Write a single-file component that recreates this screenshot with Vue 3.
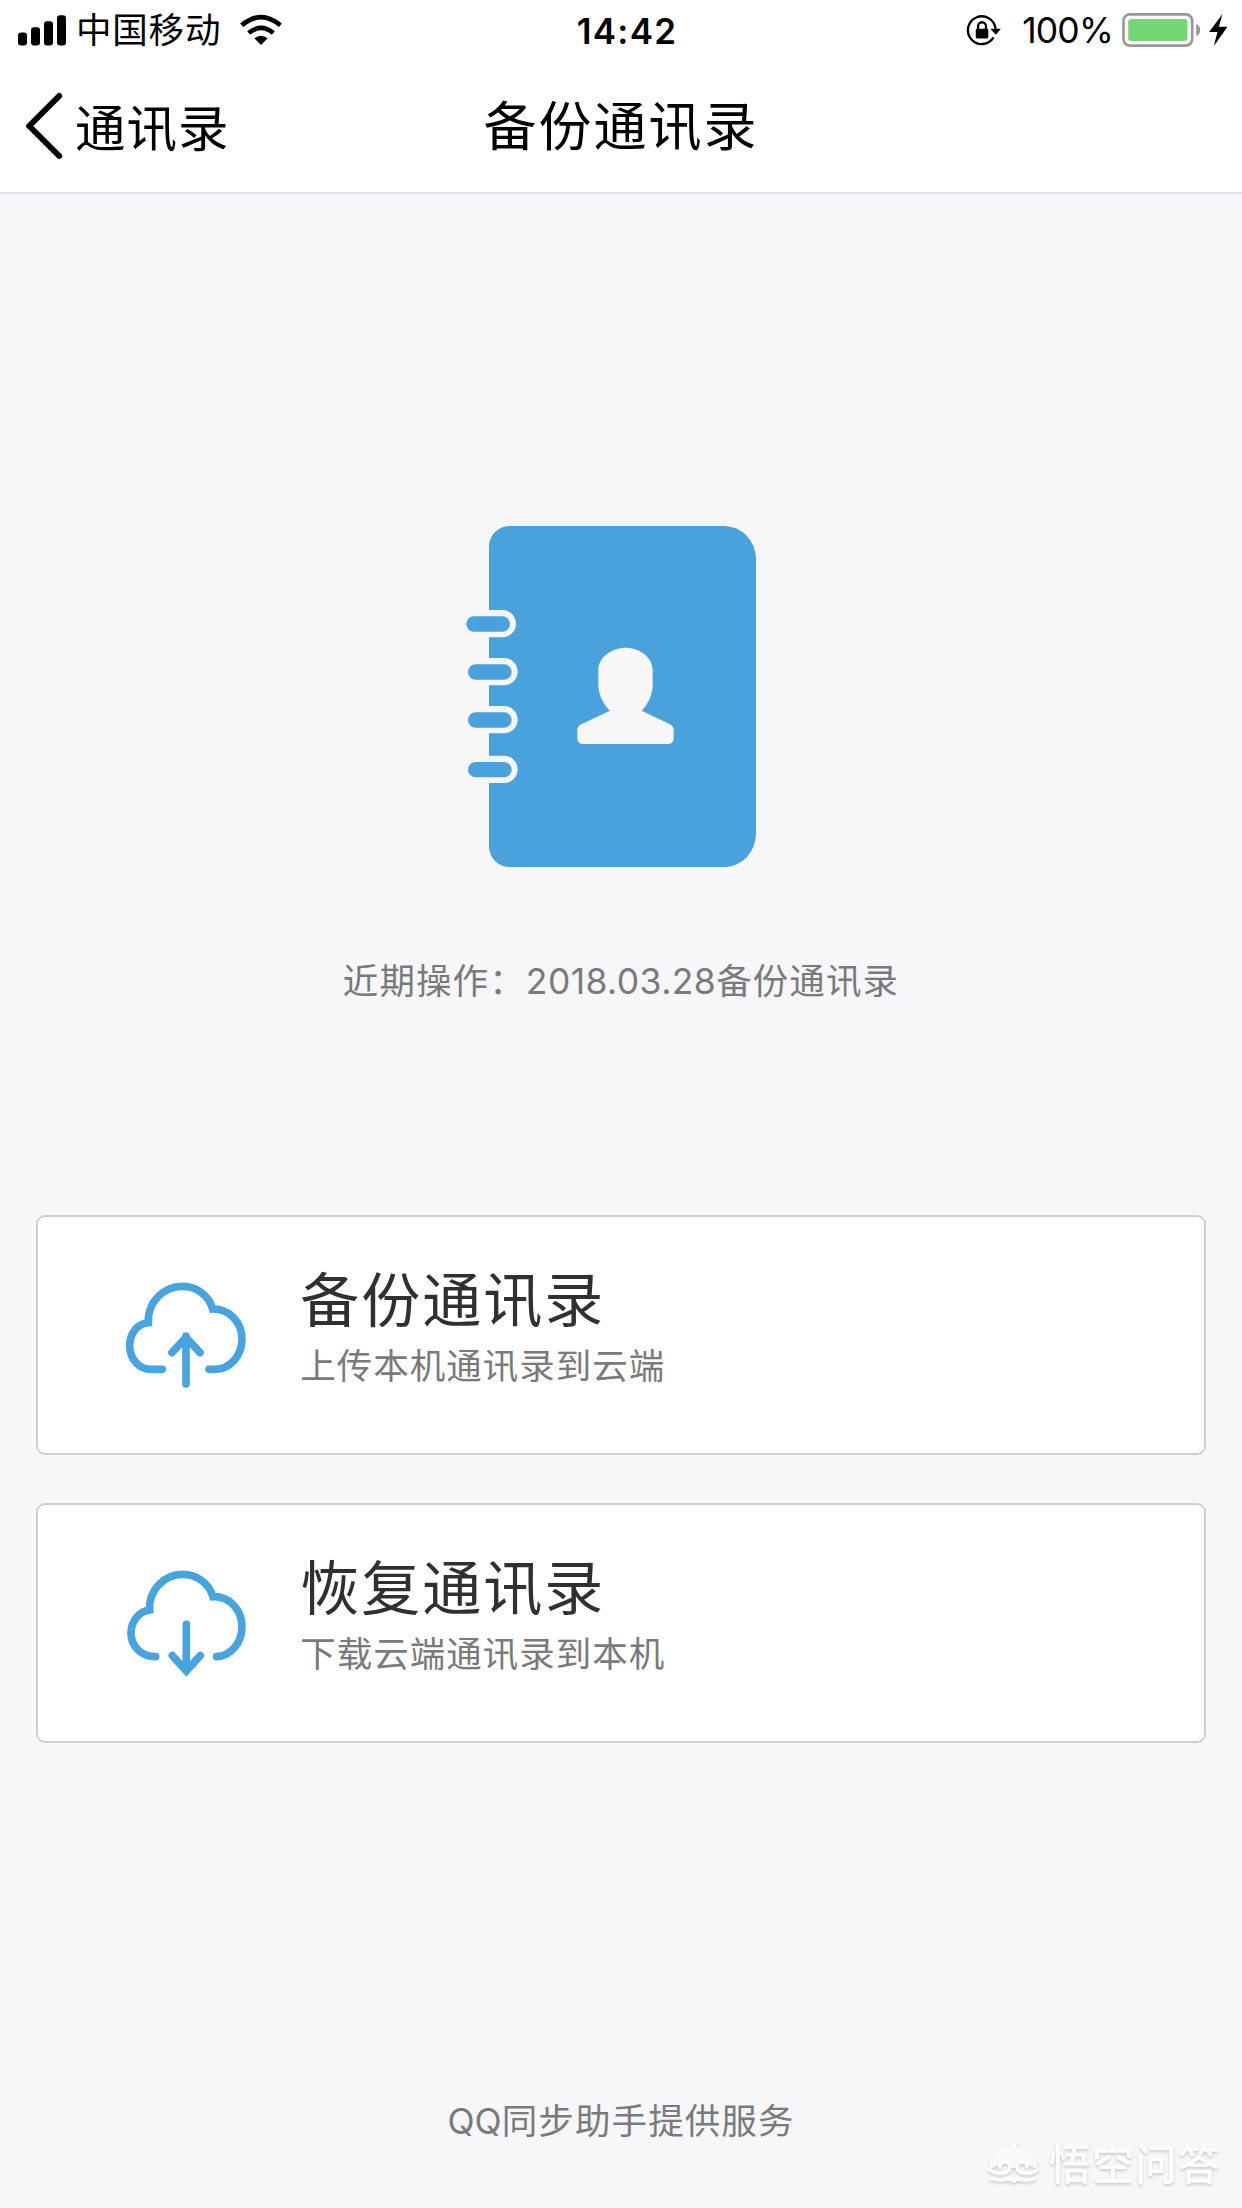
<script setup>
const actions = [
  { id: 'up', title: '备份通讯录', note: '上传本机通讯录到云端' },
  { id: 'down', title: '恢复通讯录', note: '下载云端通讯录到本机' },
]
const rings = [
  { x: 49, y: 319 },
  { x: 54, y: 463 },
  { x: 54, y: 607 },
  { x: 54, y: 756 },
]
</script>

<template>
  <div class="screen">
    <header class="top">
      <div class="status">
        <div class="side left">
          <svg class="signal" viewBox="0 0 144 92">
            <rect x="0" y="52" width="27" height="39" rx="9" />
            <rect x="39" y="36" width="27" height="55" rx="9" />
            <rect x="78" y="18" width="27" height="73" rx="9" />
            <rect x="117" y="0" width="27" height="91" rx="9" />
          </svg>
          <span class="carrier">中国移动</span>
          <svg class="wifi" viewBox="0 0 126 90">
            <path class="arc" d="M5 31Q63 -18 121 31M26 54Q63 23 100 54" />
            <path d="M43 70Q63 54 83 70L63 90Z" />
          </svg>
        </div>
        <span class="time">14:42</span>
        <div class="side right">
          <svg class="lock" viewBox="0 0 102 94">
            <path class="ring" d="M80 68A42 42 0 1 1 86 42" />
            <path d="M70 42H102L87 60Z" />
            <rect x="26" y="42" width="38" height="29" rx="4" />
            <path class="shackle" d="M33 44V34a12 12 0 0 1 24 0V44" />
          </svg>
          <span class="percent">100%</span>
          <svg class="battery" viewBox="0 0 236 102">
            <rect x="4" y="4" width="206" height="94" rx="19" fill="#fff" stroke="#9c969b" stroke-width="8" />
            <rect x="18" y="18" width="178" height="66" rx="9" fill="#73d873" />
            <path d="M222 33Q234 38 234 51T222 69Z" fill="#9c969b" />
          </svg>
          <svg class="bolt" viewBox="0 0 56 96">
            <path d="M40 0L0 54H25L14 96L55 38H29Z" />
          </svg>
        </div>
      </div>
      <nav class="nav">
        <div class="back">
          <svg viewBox="0 0 110 198"><path d="M99 9L9 99L99 189" /></svg>
          <span>通讯录</span>
        </div>
        <h1>备份通讯录</h1>
        <div class="balance"></div>
      </nav>
    </header>

    <main>
      <svg class="book" viewBox="0 0 960 1110">
        <path class="blue" d="M179 48H823A95 100 0 0 1 918 148V970A95 101 0 0 1 823 1071H179A62 62 0 0 1 117 1009V110A62 62 0 0 1 179 48Z" />
        <g v-for="r in rings" :key="r.y">
          <path class="paper" :d="`M90 ${r.y - 19}H${r.x + 108}a41 41 0 0 1 0 82H90Z`" />
          <rect class="blue" :x="r.x" :y="r.y" width="131" height="46" rx="23" />
        </g>
        <path class="paper" d="M445 480C445 441 486 413 527 413S608 441 608 480V525C608 553 594 584 575 602L657 641Q671 648 671 660V684Q671 702 653 702H400Q382 702 382 684V660Q382 650 394 643L480 602C460 584 445 553 445 525Z" />
      </svg>
      <p class="recent"><span>近期操作：</span><span class="date">2018.03.28</span><span>备份通讯录</span></p>

      <section class="cards">
        <article v-for="a in actions" :key="a.id" class="card">
          <svg class="cloud" viewBox="0 0 370 330">
            <template v-if="a.id === 'up'">
              <path d="M112 262H78C43 262 14 231 14 192C14 154 38 125 70 122C67 61 115 13 172 13C215 13 252 40 263 81C313 80 351 121 351 171C351 223 314 262 270 262H252" />
              <path d="M183 306V162M141 212L183 166L225 212" />
            </template>
            <template v-else>
              <path d="M92 260C50 260 18 230 18 190C18 153 42 124 74 120C70 61 117 13 173 13C216 13 252 40 264 80C313 78 351 119 351 170C351 219 317 258 275 260" />
              <path d="M184 163V303M142 257L184 303L226 257" />
            </template>
          </svg>
          <div class="words">
            <h2>{{ a.title }}</h2>
            <p>{{ a.note }}</p>
          </div>
        </article>
      </section>
    </main>

    <footer><span class="qq">QQ</span>同步助手提供服务</footer>

    <div class="mark">
      <svg viewBox="0 0 160 144">
        <path class="head" d="M8 96C2 60 32 35 68 30C67 19 72 9 82 2C80 14 84 18 92 11C93 20 92 25 88 30C128 34 158 58 152 96L122 84L108 72L80 96L52 72L38 84Z" />
        <path class="line" d="M8 98C28 116 69 112 69 90C69 70 39 70 39 90M152 98C132 116 91 112 91 90C91 70 121 70 121 90M14 124Q46 136 64 124L80 133L96 124Q114 136 146 124" />
      </svg>
      <span>悟空问答</span>
    </div>
  </div>
</template>

<style>
body {
  margin: 0;
}
</style>

<style scoped>
.screen {
  position: relative;
  display: flex;
  flex-direction: column;
  width: 1242px;
  height: 2208px;
  overflow: hidden;
  background: #f7f7f9;
  color: #000;
  font-family: Inter, "Noto Sans CJK SC", sans-serif;
}
h1, h2, p {
  margin: 0;
  font-weight: 400;
}
svg {
  display: block;
  flex: none;
  overflow: visible;
}
span, h1, h2 {
  white-space: nowrap;
}
.top {
  box-sizing: border-box;
  height: 194px;
  background: #fff;
  border-bottom: 2px solid #dfdfe3;
}
.status {
  display: flex;
  align-items: center;
  height: 60px;
}
.side {
  display: flex;
  align-items: center;
  flex: 1;
}
.left {
  padding-left: 18px;
}
.right {
  justify-content: flex-end;
  padding-right: 14px;
}
.signal {
  width: 48px;
  height: 31px;
}
.carrier {
  margin-left: 10px;
  padding-top: 2px;
  font-size: 35.5px;
  letter-spacing: 0.8px;
  line-height: 60px;
}
.wifi {
  width: 42px;
  height: 30px;
  margin-left: 19px;
}
.arc {
  fill: none;
  stroke: #000;
  stroke-width: 14;
}
.time {
  padding: 2px 0 0 8px;
  font-size: 35px;
  font-weight: 600;
  letter-spacing: 1.2px;
  line-height: 62px;
}
.lock {
  width: 34px;
  height: 31px;
}
.ring, .shackle {
  fill: none;
  stroke: #000;
  stroke-width: 7;
}
.percent {
  margin-left: 21px;
  padding-top: 2px;
  font-size: 35.5px;
  letter-spacing: -0.8px;
  line-height: 62px;
}
.battery {
  width: 79px;
  height: 34px;
  margin-left: 9px;
}
.bolt {
  width: 19px;
  height: 32px;
  margin-left: 8px;
}
.nav {
  display: flex;
  align-items: center;
  height: 130px;
}
.back, .balance {
  display: flex;
  align-items: center;
  flex: 1;
}
.back svg {
  width: 37px;
  height: 66px;
  margin: 2px 0 0 26px;
}
.back path {
  fill: none;
  stroke: #000;
  stroke-width: 18;
  stroke-linecap: round;
  stroke-linejoin: round;
}
.back span {
  margin-left: 12px;
  font-size: 50.5px;
  letter-spacing: 1px;
}
h1 {
  font-size: 53px;
  letter-spacing: 2px;
  line-height: 80px;
  padding-top: 4px;
}
main {
  flex: none;
}
.book {
  width: 320px;
  height: 370px;
  margin: 316px 0 0 450px;
}
.blue {
  fill: #4aa2dc;
}
.paper {
  fill: #f7f7f9;
}
.recent {
  display: flex;
  justify-content: center;
  height: 60px;
  margin-top: 72px;
  color: #7a7a7c;
  font-size: 35.5px;
  letter-spacing: 1.1px;
  line-height: 60px;
}
.date {
  font-size: 35.5px;
  letter-spacing: 0.4px;
}
.cards {
  display: flex;
  flex-direction: column;
  gap: 48px;
  margin: 203px 36px 0;
}
.card {
  box-sizing: border-box;
  display: flex;
  height: 240px;
  border: 2px solid #cfcfd2;
  border-radius: 9px;
  background: #fff;
}
.cloud {
  width: 123.3px;
  height: 110px;
  margin: 65px 0 0 87px;
}
.cloud path {
  fill: none;
  stroke: #47a4de;
  stroke-width: 23;
  stroke-linecap: round;
}
.words {
  margin: 42px 0 0 52px;
}
h2 {
  color: #303030;
  font-size: 59px;
  letter-spacing: 2px;
  line-height: 84px;
}
.words p {
  color: #7a7a7a;
  font-size: 35.5px;
  letter-spacing: 1px;
  line-height: 48px;
}
footer {
  margin-top: 349px;
  color: #7a7a7c;
  font-size: 35.5px;
  letter-spacing: 1.1px;
  line-height: 60px;
  text-align: center;
}
.qq {
  letter-spacing: 0;
}
.mark {
  position: absolute;
  left: 987px;
  top: 2131px;
  display: flex;
  align-items: center;
  height: 60px;
  color: #fdfdfe;
  filter: drop-shadow(0 2px 1.5px rgba(0, 0, 0, 0.17));
}
.mark svg {
  width: 53px;
  height: 48px;
}
.head {
  fill: #fafafc;
}
.line {
  fill: none;
  stroke: #fdfdfe;
  stroke-width: 10;
  stroke-linecap: round;
}
.mark span {
  margin-left: 9px;
  font-size: 42px;
  font-weight: 500;
  letter-spacing: 1px;
}
</style>
